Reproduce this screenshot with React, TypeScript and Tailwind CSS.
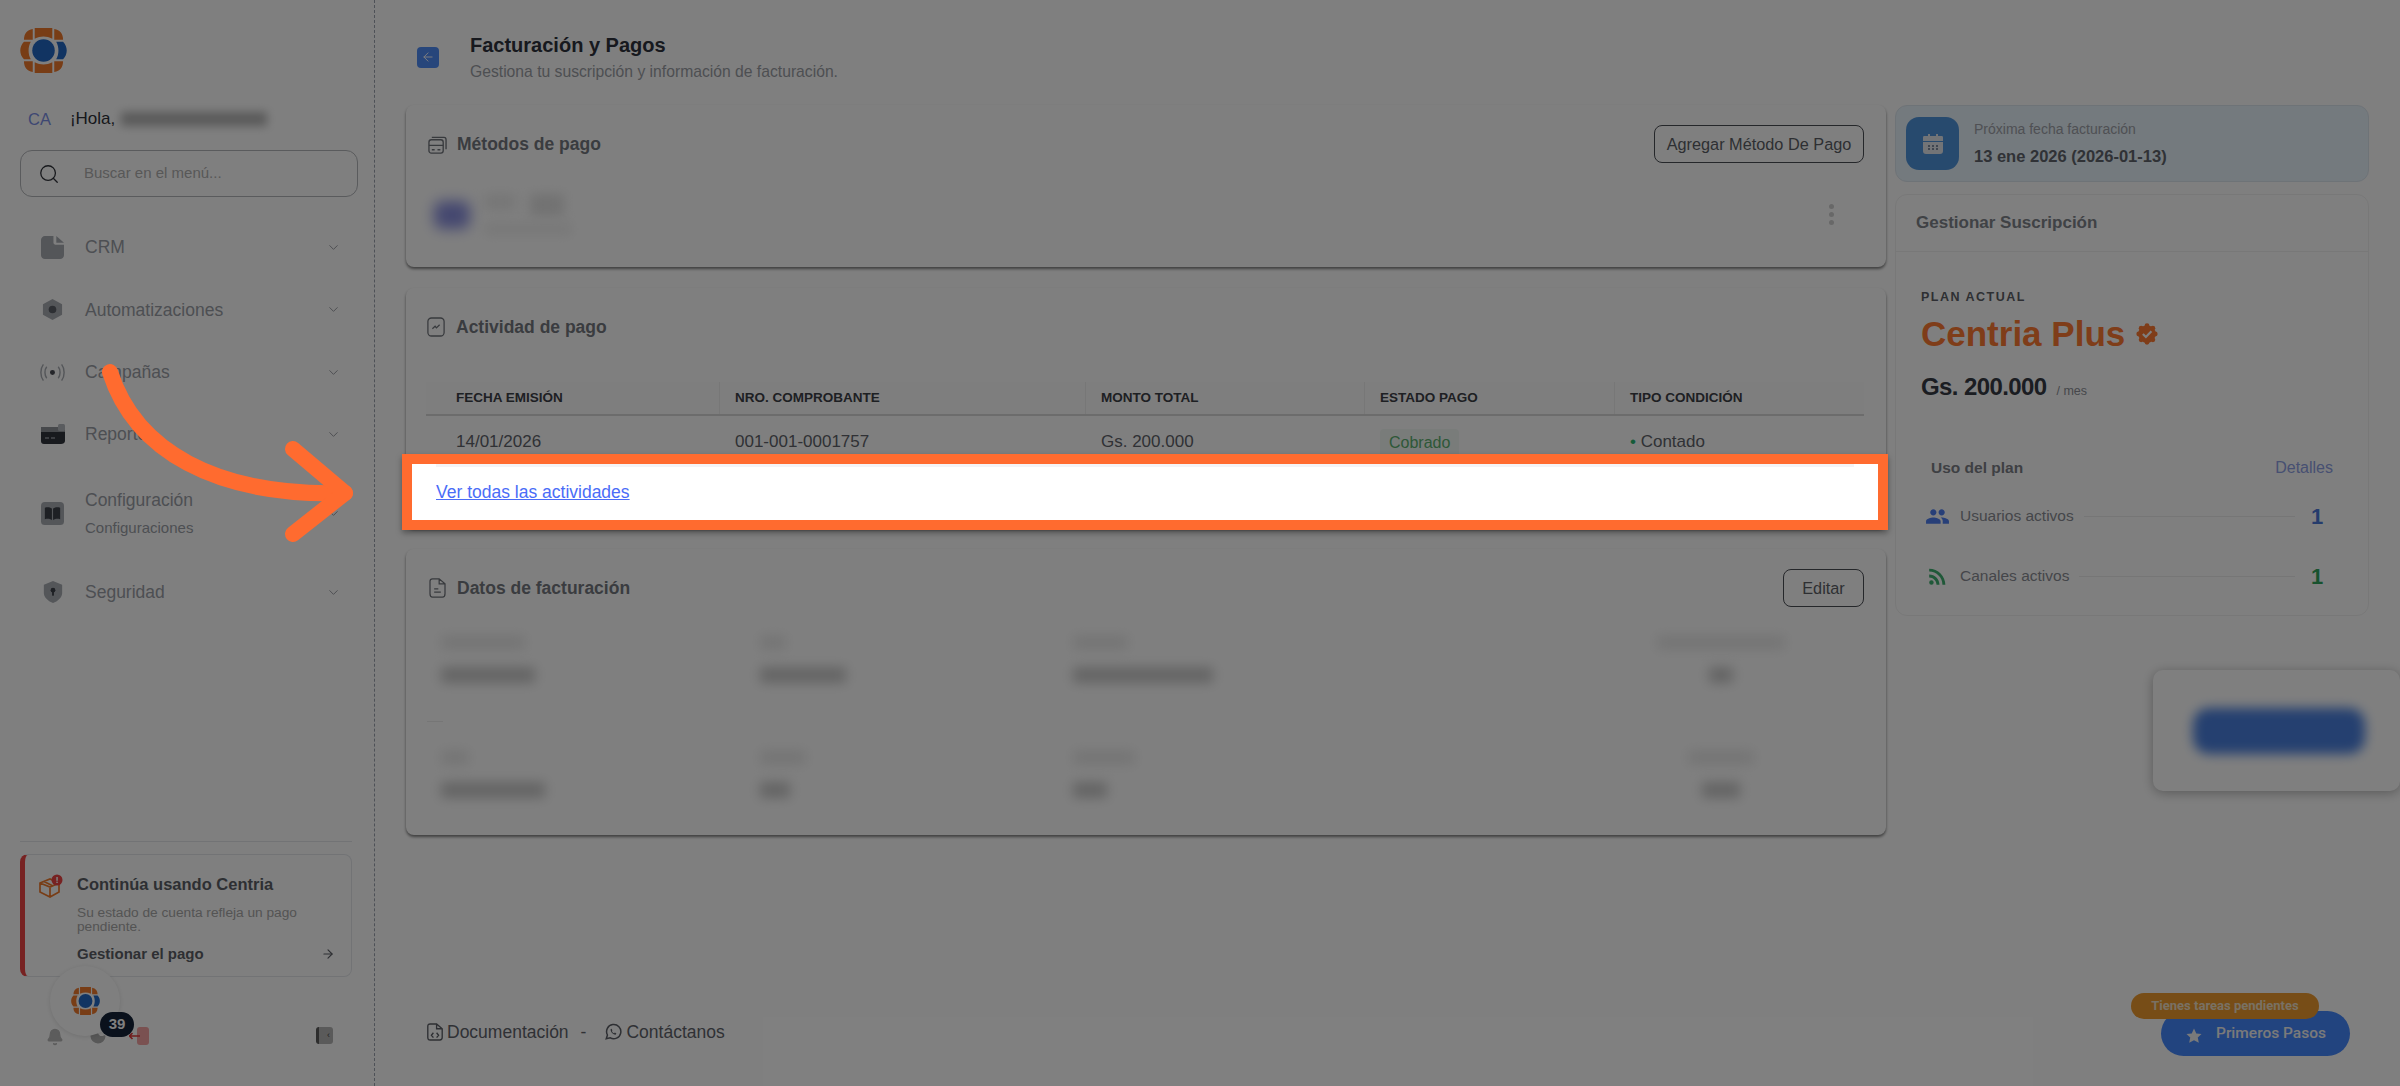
import { ArrowRight, Bell, ChevronDown, Moon, Search } from "lucide-react";
import React from "react";

const font = "font-['Liberation_Sans',Arial,sans-serif]";

function Logo({ className }: { className?: string }) {
  return (
    <svg viewBox="0 0 48 46" className={className}>
      <path d="M13 1 C7 2 4 6 4 12 H13 Z" fill="#f07a2c" />
      <path d="M15 0 H33 V11 C27 8 21 8 15 11 Z" fill="#f07a2c" />
      <path d="M35 1 C41 2 44 6 44 12 H35 Z" fill="#f07a2c" />
      <path d="M11 14 C8 19 8 27 11 32 H4 C-1 27 -1 19 4 14 Z" fill="#f07a2c" />
      <circle cx="24" cy="23" r="11.5" fill="#2368c4" />
      <path d="M37 14 H44 C49 19 49 27 44 32 H37 C40 27 40 19 37 14 Z" fill="#2368c4" />
      <path d="M13 45 C7 44 4 40 4 34 H13 Z" fill="#f07a2c" />
      <path d="M15 46 H33 V35 C27 38 21 38 15 35 Z" fill="#f07a2c" />
      <path d="M35 45 C41 44 44 40 44 34 H35 Z" fill="#f07a2c" />
    </svg>
  );
}

const CrmIcon = () => (
  <svg viewBox="0 0 24 24" className="w-[23px] h-[23px]">
    <path d="M4 0 H13 V7 C13 8 14 9 15 9 H24 V20 C24 22 22 24 20 24 H4 C2 24 0 22 0 20 V4 C0 2 2 0 4 0 Z" fill="#a9adb3" />
    <path d="M16 0 L24 7 H16 Z" fill="#a9adb3" />
  </svg>
);
const HexIcon = () => (
  <svg viewBox="0 0 24 24" className="w-[23px] h-[23px]">
    <path d="M12 1 L22 6.5 V17.5 L12 23 L2 17.5 V6.5 Z" fill="#a9adb3" />
    <circle cx="12" cy="12" r="4" fill="#5a5e66" />
  </svg>
);
const RadioIcon = () => (
  <svg viewBox="0 0 26 24" className="w-[25px] h-[23px]" fill="none" stroke="#a9adb3" strokeWidth="1.5">
    <circle cx="13" cy="12" r="2.6" fill="#4a4d55" stroke="none" />
    <path d="M7 6 C4.5 9 4.5 15 7 18 M19 6 C21.5 9 21.5 15 19 18 M3.5 3.5 C0 8 0 16 3.5 20.5 M22.5 3.5 C26 8 26 16 22.5 20.5" />
  </svg>
);
const WalletIcon = () => (
  <svg viewBox="0 0 24 20" className="w-[24px] h-[20px]">
    <path d="M2 3 H18 V7 H24 V17 C24 19 22 20 20 20 H3 C1 20 0 19 0 17 V5 C0 4 1 3 2 3 Z" fill="#30343c" />
    <rect x="0" y="3" width="24" height="5" fill="#8f9399" />
    <rect x="17" y="0" width="7" height="7" rx="1.5" fill="#b4b8be" />
    <path d="M4 14 H8 M10 14 H14" stroke="#8f9399" strokeWidth="1.4" />
  </svg>
);
const BookIcon = () => (
  <svg viewBox="0 0 24 24" className="w-[23px] h-[23px]">
    <rect width="24" height="24" rx="4" fill="#a9adb3" />
    <path d="M4 6 C7 5 10 5.5 11.4 7 V19 C10 17.5 7 17 4 18 Z M20 6 C17 5 14 5.5 12.6 7 V19 C14 17.5 17 17 20 18 Z" fill="#3c4048" />
  </svg>
);
const ShieldIcon = () => (
  <svg viewBox="0 0 24 24" className="w-[22px] h-[22px]">
    <path d="M12 0 L22 4 V13 C22 18 17 22 12 24 C7 22 2 18 2 13 V4 Z" fill="#a9adb3" />
    <circle cx="12" cy="10" r="2.6" fill="#3c4048" />
    <rect x="11" y="11" width="2" height="5" fill="#3c4048" />
  </svg>
);

function NavItem({ icon, label, sub, h }: { icon: React.ReactNode; label: string; sub?: string; h: string }) {
  return (
    <div className={`flex items-center pl-[20px] pr-[17px] ${h}`}>
      <div className="w-[25px] flex justify-center shrink-0">{icon}</div>
      <div className="ml-[20px] flex-1">
        <div className="text-[17.5px] leading-[22px] text-[#9a9ea6]">{label}</div>
        {sub && <div className="text-[15px] leading-[20px] mt-[7px] text-[#9a9ea6]">{sub}</div>}
      </div>
      <ChevronDown className="w-[15px] h-[15px] text-[#94979e]" strokeWidth={1.5} />
    </div>
  );
}

function Sidebar() {
  return (
    <aside className="w-[375px] shrink-0 h-full flex flex-col border-r border-dashed border-[#9ca3af] pl-[20px] pr-[16px]">
      <Logo className="w-[47px] h-[45px] mt-[28px]" />
      <div className="flex items-center mt-[27px] h-[38px]">
        <span className="ml-[8px] text-[16.5px] text-[#7c8fe6]">CA</span>
        <span className="ml-[19px] text-[17px] text-[#2e3138]">¡Hola,</span>
        <div className="ml-[6px] w-[146px] h-[14px] bg-[#b4b4b4] blur-[5px]" />
      </div>
      <div className="mt-[12px] h-[47px] w-[338px] rounded-[12px] border border-[#b4b6ba] flex items-center">
        <Search className="ml-[17px] w-[22px] h-[22px] text-[#30333a]" strokeWidth={1.4} />
        <span className="ml-[24px] text-[15px] text-[#b0b0b0]">Buscar en el menú...</span>
      </div>
      <nav className="mt-[19px]">
        <NavItem h="h-[62px]" icon={<CrmIcon />} label="CRM" />
        <NavItem h="h-[63px]" icon={<HexIcon />} label="Automatizaciones" />
        <NavItem h="h-[62px]" icon={<RadioIcon />} label="Campañas" />
        <NavItem h="h-[62px]" icon={<WalletIcon />} label="Reportes" />
        <NavItem h="h-[96px]" icon={<BookIcon />} label="Configuración" sub="Configuraciones" />
        <NavItem h="h-[62px]" icon={<ShieldIcon />} label="Seguridad" />
      </nav>

      <div className="mt-auto border-t border-[#e5e7eb] pt-[12px] w-[332px]">
        <div className="h-[123px] rounded-[8px] border border-[#e5e7eb] border-l-[5px] border-l-[#ef4444] flex pl-[14px] pr-[16px]">
          <svg viewBox="0 0 24 24" className="w-[24px] h-[24px] mt-[19px] shrink-0">
            <path d="M1 9 L11 5 L20 9 V18 L11 23 L1 18 Z M1 9 L11 13 L20 9 M11 13 V23 M5 7.5 L14 12" fill="none" stroke="#f07a2c" strokeWidth="1.7" />
            <circle cx="18" cy="6" r="5.5" fill="#ef4444" />
            <rect x="17.3" y="3" width="1.5" height="3.8" fill="#fff" />
            <rect x="17.3" y="7.6" width="1.5" height="1.4" fill="#fff" />
          </svg>
          <div className="ml-[14px] flex-1">
            <div className="mt-[19px] text-[16.5px] leading-[20px] font-semibold text-[#5c5f66]">Continúa usando Centria</div>
            <div className="mt-[12px] text-[13.7px] leading-[14px] text-[#a8a8a8]">Su estado de cuenta refleja un pago pendiente.</div>
            <div className="mt-[9px] flex items-center justify-between">
              <span className="text-[15px] font-semibold text-[#5c5f66]">Gestionar el pago</span>
              <ArrowRight className="w-[14px] h-[14px] text-[#5c5f66]" />
            </div>
          </div>
        </div>
        <div className="h-[109px] pt-[50px] pl-[26px] flex items-start">
          <Bell className="w-[18px] h-[20px] text-[#b8b8b8]" fill="#b8b8b8" />
          <Moon className="ml-[25px] w-[18px] h-[18px] text-[#b0b0b0]" fill="#b0b0b0" />
          <svg viewBox="0 0 20 18" className="ml-[22px] w-[20px] h-[18px]">
            <rect x="8" y="0" width="12" height="18" rx="3" fill="#f5a3a3" />
            <path d="M0 9 H11 M3.5 6 L0.5 9 L3.5 12" fill="none" stroke="#e23b3b" strokeWidth="1.6" />
          </svg>
          <div className="ml-[167px] w-[17px] h-[17px] rounded-[3px] bg-[#b4b4b4] flex items-center justify-end pr-[3px] border-l-[3px] border-l-[#5a5a5a]">
            <span className="text-[9px] leading-none text-[#444]">‹</span>
          </div>
        </div>
      </div>
    </aside>
  );
}

function Card({ className, children }: { className?: string; children: React.ReactNode }) {
  return <section className={`bg-[#ffffff] rounded-[8px] shadow-[0_2px_3px_rgba(0,0,0,0.5)] ${className ?? ""}`}>{children}</section>;
}

function CardTitle({ icon, children }: { icon: React.ReactNode; children: React.ReactNode }) {
  return (
    <div className="flex items-center gap-[10px]">
      <div className="w-[20px] flex justify-center">{icon}</div>
      <h2 className="text-[17.5px] font-bold text-[#757980]">{children}</h2>
    </div>
  );
}

function Outline({ children, className }: { children: React.ReactNode; className?: string }) {
  return (
    <button className={`h-[38px] rounded-[8px] border border-[#4b4e55] text-[16.3px] text-[#5c5f66] ${className ?? ""}`}>{children}</button>
  );
}

const columns = [
  { label: "Fecha emisión", w: "w-[293px]" },
  { label: "Nro. comprobante", w: "w-[366px]" },
  { label: "Monto total", w: "w-[279px]" },
  { label: "Estado pago", w: "w-[250px]" },
  { label: "Tipo condición", w: "flex-1" },
];

function BlurBlock({ w, h, tone }: { w: string; h: string; tone: string }) {
  return <div className={`${w} ${h} ${tone} blur-[6px]`} />;
}

function BillingCell({ a, b, className }: { a: string; b: string; className: string }) {
  return (
    <div className={className}>
      <BlurBlock w={a} h="h-[15px]" tone="bg-[#ebebeb]" />
      <div className="mt-[17px]">
        <BlurBlock w={b} h="h-[16px]" tone="bg-[#cacaca]" />
      </div>
    </div>
  );
}

function PlanPanel() {
  return (
    <div className="w-[474px] shrink-0 flex flex-col gap-[12px]">
      <div className="h-[77px] rounded-[12px] bg-[#e8f4fc] border border-[#dde6ee] flex items-center pl-[10px]">
        <div className="w-[53px] h-[53px] rounded-[13px] bg-[#4f94dc] flex items-center justify-center">
          <svg viewBox="0 0 24 24" className="w-[24px] h-[24px]">
            <path d="M3 4 H7 V2 H9 V4 H15 V2 H17 V4 H21 C22 4 22 5 22 6 V9 H2 V6 C2 5 2 4 3 4 Z" fill="#e4e8ee" />
            <path d="M2 10 H22 V19 C22 21 21 22 19 22 H5 C3 22 2 21 2 19 Z" fill="#e4e8ee" />
            <path d="M7 14 H9 M11 14 H13 M15 14 H17 M7 17 H9 M11 17 H13 M15 17 H17" stroke="#5c6f88" strokeWidth="1.5" />
          </svg>
        </div>
        <div className="ml-[15px] -mt-[2px]">
          <div className="text-[14px] leading-[18px] text-[#9ea1a8]">Próxima fecha facturación</div>
          <div className="mt-[8px] text-[16.5px] leading-[20px] font-bold text-[#60646c]">13 ene 2026 (2026-01-13)</div>
        </div>
      </div>
      <div className="h-[422px] rounded-[12px] bg-white border border-[#f1f1f1]">
        <div className="h-[57px] border-b border-[#f0f0f0] flex items-center pl-[20px] text-[17px] font-bold text-[#80848b]">Gestionar Suscripción</div>
        <div className="pl-[25px] pr-[35px]">
          <div className="mt-[37px] text-[12.5px] leading-[16px] font-bold tracking-[1.5px] text-[#5c5f66]">PLAN ACTUAL</div>
          <div className="mt-[8px] flex items-center">
            <span className="text-[35px] leading-[42px] font-bold text-[#ff7a33]">Centria Plus</span>
            <svg viewBox="0 0 24 24" className="ml-[11px] w-[22px] h-[22px]">
              <circle cx="12" cy="12" r="9.5" fill="#ff7a33" />
              <g fill="#ff7a33">
                <circle cx="12" cy="3" r="2.6" />
                <circle cx="18.4" cy="5.6" r="2.6" />
                <circle cx="21" cy="12" r="2.6" />
                <circle cx="18.4" cy="18.4" r="2.6" />
                <circle cx="12" cy="21" r="2.6" />
                <circle cx="5.6" cy="18.4" r="2.6" />
                <circle cx="3" cy="12" r="2.6" />
                <circle cx="5.6" cy="5.6" r="2.6" />
              </g>
              <path d="M7.5 12 L10.8 15.3 L16.8 9" fill="none" stroke="#ffffff" strokeWidth="2.4" />
            </svg>
          </div>
          <div className="mt-[17px] flex items-baseline">
            <span className="text-[24px] leading-[30px] font-bold tracking-[-0.6px] text-[#363a44]">Gs. 200.000</span>
            <span className="ml-[10px] text-[12.5px] text-[#8c8f96]">/ mes</span>
          </div>
          <div className="mt-[54px] ml-[10px] flex items-center justify-between">
            <span className="text-[15.5px] font-bold text-[#7c8087]">Uso del plan</span>
            <span className="text-[16px] text-[#8ea0e4]">Detalles</span>
          </div>
          <div className="mt-[21px] flex items-center h-[30px] ml-[4px]">
            <svg viewBox="0 0 24 24" className="w-[25px] h-[25px]" fill="#4f7ff0">
              <path d="M16 11c1.66 0 2.99-1.34 2.99-3S17.66 5 16 5c-1.66 0-3 1.34-3 3s1.34 3 3 3zm-8 0c1.66 0 2.99-1.34 2.99-3S9.66 5 8 5C6.34 5 5 6.34 5 8s1.34 3 3 3zm0 2c-2.33 0-7 1.17-7 3.5V19h14v-2.5c0-2.33-4.67-3.5-7-3.5zm8 0c-.29 0-.62.02-.97.05 1.16.84 1.97 1.97 1.97 3.45V19h6v-2.5c0-2.33-4.67-3.5-7-3.5z" />
            </svg>
            <span className="ml-[10px] text-[15.5px] text-[#8a8d94]">Usuarios activos</span>
            <div className="mx-[10px] flex-1 h-px bg-[#ececec]" />
            <span className="w-[24px] mr-[4px] text-[22px] font-bold text-[#4a78d8] text-center">1</span>
          </div>
          <div className="mt-[30px] flex items-center h-[30px] ml-[4px]">
            <svg viewBox="0 0 24 24" className="w-[25px] h-[25px]" fill="#3fb070">
              <path d="M6.18 15.64a2.18 2.18 0 1 1 0 4.36 2.18 2.18 0 0 1 0-4.36z M4 4.44v2.83c7.03 0 12.73 5.7 12.73 12.73h2.83c0-8.59-6.97-15.56-15.56-15.56zm0 5.66v2.83c3.9 0 7.07 3.17 7.07 7.07h2.83c0-5.47-4.43-9.9-9.9-9.9z" />
            </svg>
            <span className="ml-[10px] text-[15.5px] text-[#8a8d94]">Canales activos</span>
            <div className="mx-[10px] flex-1 h-px bg-[#ececec]" />
            <span className="w-[24px] mr-[4px] text-[22px] font-bold text-[#2fa45c] text-center">1</span>
          </div>
        </div>
      </div>
    </div>
  );
}

function Main() {
  return (
    <main className="flex-1 h-full pl-[31px] pr-[31px] flex flex-col">
      <header className="h-[105px] flex items-center shrink-0">
        <div className="ml-[11px] w-[22px] h-[21px] rounded-[4px] bg-[#4f8cf7] flex items-center justify-center mt-[9px]">
          <ArrowRight className="w-[14px] h-[14px] text-white rotate-180" strokeWidth={1.6} />
        </div>
        <div className="ml-[31px] mt-[8px]">
          <h1 className="text-[20px] leading-[26px] font-bold text-[#2e323c]">Facturación y Pagos</h1>
          <p className="mt-[4px] text-[15.7px] leading-[20px] text-[#9b9ea5]">Gestiona tu suscripción y información de facturación.</p>
        </div>
      </header>
      <div className="flex gap-[9px] items-start">
        <div className="w-[1480px] shrink-0 flex flex-col gap-[21px]">
          <Card className="h-[162px] pt-[20px] pl-[21px] pr-[22px]">
            <div className="flex items-center justify-between">
              <CardTitle
                icon={
                  <svg viewBox="0 0 20 20" className="w-[19px] h-[19px]" fill="none" stroke="#70747b" strokeWidth="1.4">
                    <rect x="1" y="5" width="15" height="14" rx="2.5" />
                    <path d="M1 11 H16 M4 2.5 H17 C18 2.5 19 3.5 19 5 V15 M4 15.5 H7 M10 15.5 H13" />
                  </svg>
                }
              >
                Métodos de pago
              </CardTitle>
              <Outline className="w-[210px]">Agregar Método De Pago</Outline>
            </div>
            <div className="mt-[31px] flex items-start justify-between">
              <div className="flex items-center ml-[7px] gap-[14px]">
                <div className="w-[36px] h-[28px] rounded-[8px] bg-[#8a90e0] blur-[7px]" />
                <div>
                  <div className="flex gap-[14px]">
                    <BlurBlock w="w-[32px]" h="h-[16px]" tone="bg-[#ededed]" />
                    <BlurBlock w="w-[34px]" h="h-[22px]" tone="bg-[#e4e4e4]" />
                  </div>
                  <div className="mt-[7px]">
                    <BlurBlock w="w-[88px]" h="h-[12px]" tone="bg-[#f0f0f0]" />
                  </div>
                </div>
              </div>
              <div className="mr-[30px] flex flex-col gap-[3px] mt-[10px]">
                <div className="w-[5px] h-[5px] rounded-full bg-[#d0d0d0]" />
                <div className="w-[5px] h-[5px] rounded-full bg-[#d0d0d0]" />
                <div className="w-[5px] h-[5px] rounded-full bg-[#d0d0d0]" />
              </div>
            </div>
          </Card>

          <Card className="h-[240px] pt-[26px] pl-[20px] pr-[22px]">
            <CardTitle
              icon={
                <svg viewBox="0 0 20 22" className="w-[18px] h-[20px]" fill="none" stroke="#70747b" strokeWidth="1.4">
                  <rect x="1" y="1" width="18" height="20" rx="4" />
                  <path d="M6 13 L9 10 L10.5 12 L14 8.5" />
                </svg>
              }
            >
              Actividad de pago
            </CardTitle>
            <div className="mt-[42px] h-[34px] flex border-b-2 border-[#d8d8d8] bg-[#fcfcfc]">
              {columns.map((c, i) => (
                <div key={c.label} className={`${c.w} ${i ? "border-l border-[#eeeeee]" : ""} pl-[15px] first:pl-[30px] text-[13.5px] leading-[31px] font-bold uppercase text-[#3d4047]`}>
                  {c.label}
                </div>
              ))}
            </div>
            <div className="flex h-[50px] items-start pt-[14px] text-[17px] leading-[24px] text-[#60636a]">
              <div className="w-[293px] pl-[30px]">14/01/2026</div>
              <div className="w-[366px] pl-[16px]">001-001-0001757</div>
              <div className="w-[279px] pl-[16px]">Gs. 200.000</div>
              <div className="w-[250px] pl-[16px]">
                <span className="inline-block -mt-[1px] px-[9px] py-[2px] rounded-[4px] bg-[#f2f9f4] text-[#5cb070] text-[16px]">Cobrado</span>
              </div>
              <div className="flex-1 pl-[16px]">
                <span className="text-[#2bb673]">• </span>Contado
              </div>
            </div>
          </Card>

          <Card className="h-[286px] pt-[20px] pl-[21px] pr-[22px]">
            <div className="flex items-center justify-between">
              <CardTitle
                icon={
                  <svg viewBox="0 0 20 24" className="w-[17px] h-[20px]" fill="none" stroke="#70747b" strokeWidth="1.5">
                    <path d="M4 1 H12 L19 7 V19 C19 21 18 23 16 23 H4 C2 23 1 21 1 19 V4 C1 2 2 1 4 1 Z M12 1 V7 H19 M6 13 H11 M6 17 H14" />
                  </svg>
                }
              >
                Datos de facturación
              </CardTitle>
              <Outline className="w-[81px]">Editar</Outline>
            </div>
            <div className="mt-[28px] ml-[14px] flex h-[62px]">
              <BillingCell className="w-[319px]" a="w-[84px]" b="w-[94px]" />
              <BillingCell className="w-[313px]" a="w-[26px]" b="w-[86px]" />
              <BillingCell className="w-[580px]" a="w-[55px]" b="w-[140px]" />
              <BillingCell className="w-[135px] flex flex-col items-center" a="w-[128px]" b="w-[24px]" />
            </div>
            <div className="mt-[24px] w-[16px] h-px bg-[#ececec]" />
            <div className="mt-[28px] ml-[14px] flex h-[62px]">
              <BillingCell className="w-[319px]" a="w-[28px]" b="w-[104px]" />
              <BillingCell className="w-[313px]" a="w-[46px]" b="w-[30px]" />
              <BillingCell className="w-[580px]" a="w-[62px]" b="w-[34px]" />
              <BillingCell className="w-[135px] flex flex-col items-center" a="w-[66px]" b="w-[38px]" />
            </div>
          </Card>
        </div>
        <PlanPanel />
      </div>
      <footer className="mt-auto mb-[41px] ml-[21px] flex items-center text-[17.5px] text-[#60636b]">
        <svg viewBox="0 0 20 22" className="w-[16px] h-[18px]" fill="none" stroke="#5c5f66" strokeWidth="1.7">
          <path d="M4 1 H12 L19 7 V18 C19 20 18 21 16 21 H4 C2 21 1 20 1 18 V4 C1 2 2 1 4 1 Z M12 1 V7 H19 M8 12 L5.5 15 L8 18 M12 12 L14.5 15 L12 18" />
        </svg>
        <span className="ml-[4px]">Documentación</span>
        <span className="ml-[12px]">-</span>
        <svg viewBox="0 0 24 24" className="ml-[18px] w-[18px] h-[18px]" fill="none" stroke="#5c5f66" strokeWidth="2">
          <path d="M3 21 L4.6 16 A9.5 9.5 0 1 1 8 19.6 Z" />
          <path d="M9 8 C8 10 11 15.5 15.5 15.5 L16.5 14 L14.5 12.8 L13.5 13.5 C12 13 11 12 10.5 10.5 L11.2 9.5 L10 7.5 Z" fill="#5c5f66" stroke="none" />
        </svg>
        <span className="ml-[4px]">Contáctanos</span>
      </footer>
    </main>
  );
}

export default function App() {
  return (
    <div className={`${font} relative w-[2400px] h-[1086px] overflow-hidden bg-[#ffffff] flex`}>
      <Sidebar />
      <Main />

      {/* floating widgets, under the tour's dim layer */}
      <div className="absolute left-[50px] top-[966px] w-[70px] h-[70px] rounded-full bg-white shadow-[0_1px_5px_rgba(0,0,0,0.12)] flex items-center justify-center">
        <Logo className="w-[29px] h-[28px]" />
      </div>
      <div className="absolute left-[100px] top-[1012px] w-[34px] h-[25px] rounded-full bg-[#142238] flex items-center justify-center text-[15px] font-bold text-white">39</div>
      <div className="absolute left-[2153px] top-[670px] w-[247px] h-[121px] rounded-[10px] bg-white shadow-[0_2px_12px_rgba(0,0,0,0.3)] flex items-center justify-center">
        <div className="w-[172px] h-[46px] ml-[4px] rounded-[16px] bg-[#4a80e0] blur-[6px]" />
      </div>
      <div className="absolute left-[2161px] top-[1011px] w-[189px] h-[45px] rounded-full bg-[#4589ff] flex items-center pl-[24px]">
        <svg viewBox="0 0 24 24" className="w-[18px] h-[18px] mt-[4px]" fill="#f4f4f4">
          <path d="M12 2 L15 8.5 L22 9.3 L17 14 L18.4 21 L12 17.6 L5.6 21 L7 14 L2 9.3 L9 8.5 Z" />
        </svg>
        <span className="ml-[13px] font-['Roboto',sans-serif] text-[15.5px] font-medium text-[#f4f4f4]">Primeros Pasos</span>
      </div>
      <div className="absolute left-[2131px] top-[993px] w-[188px] h-[26px] rounded-full bg-[#ee9a2e] flex items-center justify-center font-['Roboto',sans-serif] text-[13px] font-bold text-[#f2e2c8]">
        Tienes tareas pendientes
      </div>

      <div className="absolute inset-0 bg-black/50" />

      {/* highlighted step */}
      <div className="absolute left-[402px] top-[454px] w-[1486px] h-[76px] border-[10px] border-[#ff6b2f] bg-white shadow-[0_3px_6px_rgba(0,0,0,0.35)]">
        <div className="mx-[24px] h-[3px] bg-[#f4f4f6]" />
        <a className="block ml-[24px] mt-[14px] text-[17.5px] leading-[22px] text-[#4a6cf7] underline">Ver todas las actividades</a>
      </div>
      <svg className="absolute left-0 top-0 pointer-events-none" width="400" height="600" fill="none" stroke="#ff6b2f" strokeWidth="16" strokeLinecap="round" strokeLinejoin="round">
        <path d="M110 372 C135 450 215 497 345 493" />
        <path d="M293 449 L345 493 L293 534" />
      </svg>
    </div>
  );
}
